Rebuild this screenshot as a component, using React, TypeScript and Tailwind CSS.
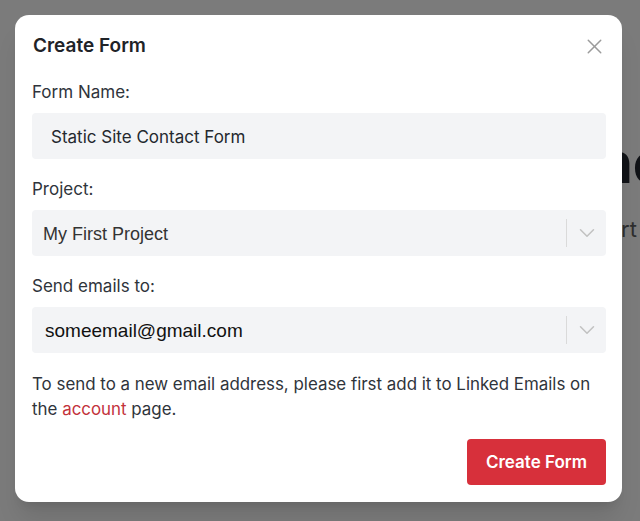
import { X, ChevronDown } from "lucide-react";

const inter = { fontFamily: "Inter, 'Noto Sans', sans-serif" };

function SelectBox({ value, className }: { value: string; className: string }) {
  return (
    <div className="flex h-[46px] items-center rounded bg-[#f3f4f6]">
      <div className={`flex-1 whitespace-nowrap pt-[2px] ${className}`} style={{ fontFamily: "'Liberation Sans', Arial, sans-serif" }}>
        {value}
      </div>
      <div className="h-[28px] w-px bg-[#dadada]" />
      <div className="flex w-[39px] items-center justify-center">
        <ChevronDown size={26} strokeWidth={1.4} className="text-[#c2c2c2]" />
      </div>
    </div>
  );
}

export default function App() {
  return (
    <div className="relative h-[521px] w-[640px] overflow-hidden bg-[#7b7b7b]" style={inter}>
      {/* page behind the overlay */}
      <div className="pt-[128px] pl-[598px] whitespace-nowrap">
        <div className="text-[56px] font-bold leading-[70px] text-[#111317]">ne</div>
        <div className="mt-[16px] pl-[23px] text-[22px] leading-[30px] text-[#2e2e2e]">rt</div>
      </div>

      <div className="absolute left-[15px] top-[15px] flex h-[487px] w-[607px] flex-col rounded-[14px] bg-white pl-[17px] pr-[16px] pt-[17px] pb-[17px] shadow-xl">
        <div className="flex h-[28px] items-center justify-between">
          <h2 className="pl-px text-[19px] font-semibold leading-7 text-[#1f2328]">Create Form</h2>
          <X size={25} strokeWidth={1.4} className="mr-[-1px] text-[#9b9b9b]" />
        </div>

        <label className="mt-[20px] text-[17px] leading-6 text-[#2f343b]">Form Name:</label>
        <div className="mt-[9px] flex h-[46px] items-center rounded bg-[#f3f4f6] pl-[19px] pt-[3px] text-[17px] text-[#24282e]">
          Static Site Contact Form
        </div>

        <label className="mt-[18px] text-[17px] leading-6 text-[#2f343b]">Project:</label>
        <div className="mt-[9px]">
          <SelectBox value="My First Project" className="pl-[11px] text-[18px] text-[#333333]" />
        </div>

        <label className="mt-[18px] text-[17px] leading-6 text-[#2f343b]">Send emails to:</label>
        <div className="mt-[9px]">
          <SelectBox value="someemail@gmail.com" className="pl-[13px] text-[19px] text-[#111111]" />
        </div>

        <p className="mt-[19px] text-[16.9px] leading-[25px] text-[#2f343b]">
          To send to a new email address, please first add it to Linked Emails on the{" "}
          <span className="text-[#c3323b]">account</span> page.
        </p>

        <div className="mt-auto flex justify-end">
          <button className="h-[46px] w-[139px] rounded bg-[#d7303b] pt-px text-[17px] font-semibold text-white">
            Create Form
          </button>
        </div>
      </div>
    </div>
  );
}
